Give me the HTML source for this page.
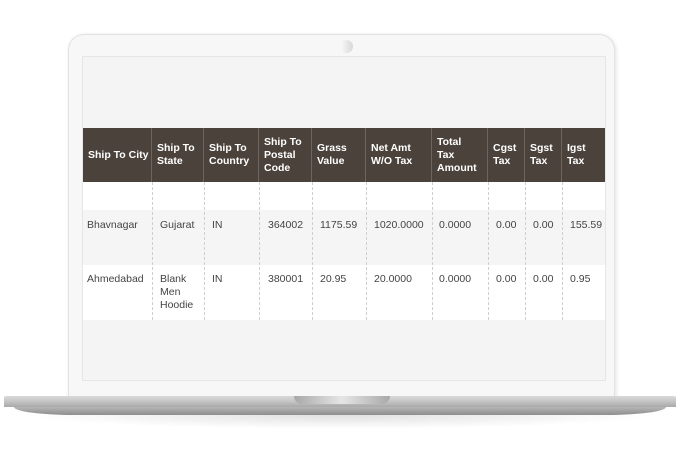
<!DOCTYPE html>
<html><head><style>
*{margin:0;padding:0;box-sizing:border-box}
body{width:680px;height:450px;background:#fff;position:relative;overflow:hidden;font-family:"Liberation Sans",sans-serif}
.lid{position:absolute;left:68px;top:34px;width:547px;height:366px;background:#f7f7f7;border:1px solid #e2e2e2;border-radius:16px 16px 0 0;box-shadow:1px 1px 4px rgba(0,0,0,.12)}
.screen{position:absolute;left:82px;top:56px;width:524px;height:325px;background:#f4f4f4;border:1px solid #e6e6e6;overflow:hidden}
.cam{position:absolute;left:340px;top:40px;width:13px;height:13px;border-radius:50%;background:linear-gradient(90deg,#fafafa,#d8d8d8)}
.base{position:absolute;left:4px;top:396px;width:672px;height:11px;background:linear-gradient(#d9d9d9,#c4c4c4 50%,#a9a9a9);border-radius:2px 2px 0 0}
.base2{position:absolute;left:14px;top:407px;width:652px;height:8px;background:linear-gradient(#b6b6b6,#8e8e8e);border-radius:0 0 60px 60px/0 0 8px 8px}
.shadow{position:absolute;left:20px;top:415px;width:640px;height:14px;background:radial-gradient(ellipse at top,rgba(0,0,0,.12),rgba(0,0,0,0) 70%)}
.notch{position:absolute;left:294px;top:396px;width:96px;height:8px;background:linear-gradient(90deg,#a8a8a8,#e6e6e6 50%,#a8a8a8);border-radius:0 0 8px 8px}
.c{position:absolute;font-size:10.5px;line-height:13px;padding-left:5px}
.h{position:absolute;top:128px;height:54px;background:#4b423b;color:#fff;font-weight:bold;font-size:10.5px;line-height:13px;padding-left:5px;display:flex;align-items:center;border-right:1px solid #6d645d}
.r{position:absolute;left:83px;width:522px}
.v{position:absolute;top:182px;height:138px;border-left:1px dashed #cfcfcf}
.t{position:absolute;color:#444;font-size:10.5px;line-height:13px}
</style></head><body>
<div class="lid"></div>
<div class="cam"></div>
<div class="screen"></div>
<div class="r" style="top:182px;height:28px;background:#fff"></div>
<div class="r" style="top:210px;height:55px;background:#f5f5f5"></div>
<div class="r" style="top:265px;height:55px;background:#fff"></div>
<div class="h" style="left:83px;width:69px">Ship To City</div>
<div class="h" style="left:152px;width:52px">Ship To<br>State</div>
<div class="h" style="left:204px;width:55px">Ship To<br>Country</div>
<div class="h" style="left:259px;width:53px">Ship To<br>Postal<br>Code</div>
<div class="h" style="left:312px;width:54px">Grass<br>Value</div>
<div class="h" style="left:366px;width:66px">Net Amt<br>W/O Tax</div>
<div class="h" style="left:432px;width:56px">Total<br>Tax<br>Amount</div>
<div class="h" style="left:488px;width:37px">Cgst<br>Tax</div>
<div class="h" style="left:525px;width:37px">Sgst<br>Tax</div>
<div class="h" style="left:562px;width:43px;border-right:none">Igst<br>Tax</div>
<div class="v" style="left:152px"></div><div class="v" style="left:204px"></div><div class="v" style="left:259px"></div><div class="v" style="left:312px"></div><div class="v" style="left:366px"></div><div class="v" style="left:432px"></div><div class="v" style="left:488px"></div><div class="v" style="left:525px"></div><div class="v" style="left:562px"></div>
<div class="t" style="left:87px;top:219px">Bhavnagar</div>
<div class="t" style="left:160px;top:219px">Gujarat</div>
<div class="t" style="left:212px;top:219px">IN</div>
<div class="t" style="left:268px;top:219px">364002</div>
<div class="t" style="left:320px;top:219px">1175.59</div>
<div class="t" style="left:374px;top:219px">1020.0000</div>
<div class="t" style="left:439px;top:219px">0.0000</div>
<div class="t" style="left:496px;top:219px">0.00</div>
<div class="t" style="left:533px;top:219px">0.00</div>
<div class="t" style="left:570px;top:219px">155.59</div>
<div class="t" style="left:87px;top:273px">Ahmedabad</div>
<div class="t" style="left:160px;top:273px">Blank<br>Men<br>Hoodie</div>
<div class="t" style="left:212px;top:273px">IN</div>
<div class="t" style="left:268px;top:273px">380001</div>
<div class="t" style="left:320px;top:273px">20.95</div>
<div class="t" style="left:374px;top:273px">20.0000</div>
<div class="t" style="left:439px;top:273px">0.0000</div>
<div class="t" style="left:496px;top:273px">0.00</div>
<div class="t" style="left:533px;top:273px">0.00</div>
<div class="t" style="left:570px;top:273px">0.95</div>
<div class="shadow"></div>
<div class="base"></div>
<div class="base2"></div>
<div class="notch"></div>
</body></html>
